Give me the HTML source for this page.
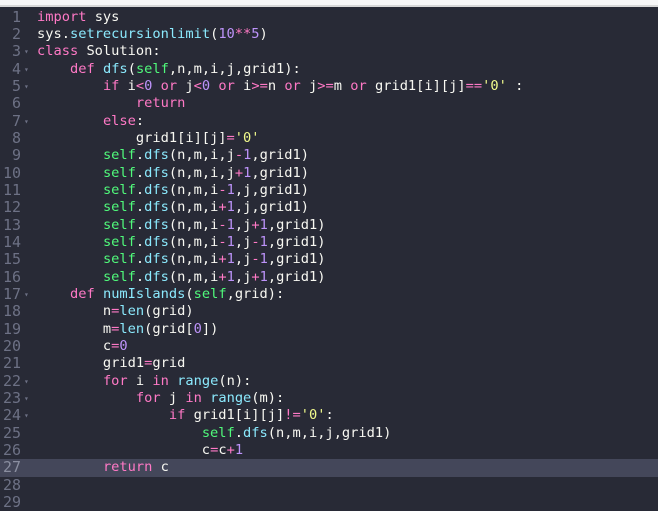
<!DOCTYPE html>
<html><head><style>
html,body{margin:0;padding:0;width:658px;height:500px;overflow:hidden;background:#282a36;}
.top{position:absolute;left:0;top:0;width:658px;height:5px;background:#f7f7f7;border-bottom:2px solid #d8d8d8;}
.ed{position:absolute;left:0;top:8.5px;width:658px;}
.l{position:relative;height:17.35px;line-height:17.35px;font-family:"DejaVu Sans Mono","Liberation Mono",monospace;font-size:13.7px;color:#f8f8f2;white-space:pre;}
.n{position:absolute;left:0;width:21px;text-align:right;color:#6d7185;font-size:15px;}
.f{position:absolute;left:24px;color:#6d7185;font-size:8px;}
.c{position:absolute;left:37px;}
.a{background:#44475a;}
.a .n{color:#8a8ea0;}
.k{color:#ff79c6}.s{color:#50fa7b}.u{color:#8be9fd}.d{color:#bd93f9}.y{color:#f1fa8c}
</style></head><body>
<div class="top"></div>
<div class="ed">
<div class="l"><span class="n">1</span><span class="c"><span class="k">import</span> sys</span></div>
<div class="l"><span class="n">2</span><span class="c">sys.<span class="u">setrecursionlimit</span>(<span class="d">10</span><span class="k">**</span><span class="d">5</span>)</span></div>
<div class="l"><span class="n">3</span><span class="f">▾</span><span class="c"><span class="k">class</span> Solution:</span></div>
<div class="l"><span class="n">4</span><span class="f">▾</span><span class="c">    <span class="k">def</span> <span class="u">dfs</span>(<span class="s">self</span>,n,m,i,j,grid1):</span></div>
<div class="l"><span class="n">5</span><span class="f">▾</span><span class="c">        <span class="k">if</span> i<span class="k">&lt;</span><span class="d">0</span> <span class="k">or</span> j<span class="k">&lt;</span><span class="d">0</span> <span class="k">or</span> i<span class="k">&gt;=</span>n <span class="k">or</span> j<span class="k">&gt;=</span>m <span class="k">or</span> grid1[i][j]<span class="k">==</span><span class="y">'0'</span> :</span></div>
<div class="l"><span class="n">6</span><span class="c">            <span class="k">return</span></span></div>
<div class="l"><span class="n">7</span><span class="f">▾</span><span class="c">        <span class="k">else</span>:</span></div>
<div class="l"><span class="n">8</span><span class="c">            grid1[i][j]<span class="k">=</span><span class="y">'0'</span></span></div>
<div class="l"><span class="n">9</span><span class="c">        <span class="s">self</span>.<span class="u">dfs</span>(n,m,i,j<span class="k">-</span><span class="d">1</span>,grid1)</span></div>
<div class="l"><span class="n">10</span><span class="c">        <span class="s">self</span>.<span class="u">dfs</span>(n,m,i,j<span class="k">+</span><span class="d">1</span>,grid1)</span></div>
<div class="l"><span class="n">11</span><span class="c">        <span class="s">self</span>.<span class="u">dfs</span>(n,m,i<span class="k">-</span><span class="d">1</span>,j,grid1)</span></div>
<div class="l"><span class="n">12</span><span class="c">        <span class="s">self</span>.<span class="u">dfs</span>(n,m,i<span class="k">+</span><span class="d">1</span>,j,grid1)</span></div>
<div class="l"><span class="n">13</span><span class="c">        <span class="s">self</span>.<span class="u">dfs</span>(n,m,i<span class="k">-</span><span class="d">1</span>,j<span class="k">+</span><span class="d">1</span>,grid1)</span></div>
<div class="l"><span class="n">14</span><span class="c">        <span class="s">self</span>.<span class="u">dfs</span>(n,m,i<span class="k">-</span><span class="d">1</span>,j<span class="k">-</span><span class="d">1</span>,grid1)</span></div>
<div class="l"><span class="n">15</span><span class="c">        <span class="s">self</span>.<span class="u">dfs</span>(n,m,i<span class="k">+</span><span class="d">1</span>,j<span class="k">-</span><span class="d">1</span>,grid1)</span></div>
<div class="l"><span class="n">16</span><span class="c">        <span class="s">self</span>.<span class="u">dfs</span>(n,m,i<span class="k">+</span><span class="d">1</span>,j<span class="k">+</span><span class="d">1</span>,grid1)</span></div>
<div class="l"><span class="n">17</span><span class="f">▾</span><span class="c">    <span class="k">def</span> <span class="u">numIslands</span>(<span class="s">self</span>,grid):</span></div>
<div class="l"><span class="n">18</span><span class="c">        n<span class="k">=</span><span class="u">len</span>(grid)</span></div>
<div class="l"><span class="n">19</span><span class="c">        m<span class="k">=</span><span class="u">len</span>(grid[<span class="d">0</span>])</span></div>
<div class="l"><span class="n">20</span><span class="c">        c<span class="k">=</span><span class="d">0</span></span></div>
<div class="l"><span class="n">21</span><span class="c">        grid1<span class="k">=</span>grid</span></div>
<div class="l"><span class="n">22</span><span class="f">▾</span><span class="c">        <span class="k">for</span> i <span class="k">in</span> <span class="u">range</span>(n):</span></div>
<div class="l"><span class="n">23</span><span class="f">▾</span><span class="c">            <span class="k">for</span> j <span class="k">in</span> <span class="u">range</span>(m):</span></div>
<div class="l"><span class="n">24</span><span class="f">▾</span><span class="c">                <span class="k">if</span> grid1[i][j]<span class="k">!=</span><span class="y">'0'</span>:</span></div>
<div class="l"><span class="n">25</span><span class="c">                    <span class="s">self</span>.<span class="u">dfs</span>(n,m,i,j,grid1)</span></div>
<div class="l"><span class="n">26</span><span class="c">                    c<span class="k">=</span>c<span class="k">+</span><span class="d">1</span></span></div>
<div class="l a"><span class="n">27</span><span class="c">        <span class="k">return</span> c</span></div>
<div class="l"><span class="n">28</span><span class="c"></span></div>
<div class="l"><span class="n">29</span><span class="c"></span></div>
</div>
</body></html>
